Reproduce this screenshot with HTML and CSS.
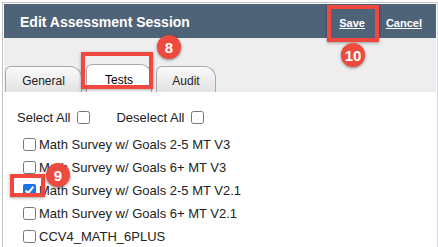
FILE: index.html
```html
<!DOCTYPE html>
<html lang="en">
<head>
    <meta charset="UTF-8">
    <title>Edit Assessment Session</title>
    <link rel="stylesheet" href="styles.css">
</head>
<body>
    <div class="dialog">
        <div class="dialog-header">
            <h1>Edit Assessment Session</h1>
            <div class="actions">
                <a href="#" class="save-link">Save</a>
                <a href="#">Cancel</a>
            </div>
        </div>
        <!-- tabs -->
        <div class="tab-band">
            <div class="tab">General</div>
            <div class="tab active">Tests</div>
            <div class="tab">Audit</div>
        </div>
        <div class="content">
            <div class="select-row">
                <label>Select All <input type="checkbox"></label>
                <label>Deselect All <input type="checkbox"></label>
            </div>
            <ul class="test-list">
                <li><label><input type="checkbox">Math Survey w/ Goals 2-5 MT V3</label></li>
                <li><label><input type="checkbox">Math Survey w/ Goals 6+ MT V3</label></li>
                <li><label><input type="checkbox" checked>Math Survey w/ Goals 2-5 MT V2.1</label></li>
                <li><label><input type="checkbox">Math Survey w/ Goals 6+ MT V2.1</label></li>
                <li><label><input type="checkbox">CCV4_MATH_6PLUS</label></li>
            </ul>
        </div>
    </div>

    <!-- callouts -->
    <div class="callout-box box-save"></div>
    <div class="badge badge-save">10</div>
    <div class="callout-box box-tests"></div>
    <div class="badge badge-tests">8</div>
    <div class="callout-box box-check"></div>
    <div class="badge badge-check">9</div>
</body>
</html>
```

FILE: styles.css
```css
body {
    margin: 0;
    font-family: "Liberation Sans", Arial, sans-serif;
    background-color: #fff;
    overflow: hidden;
}
.dialog {
    margin: 2px 0 0 2px;
    border: 1px solid #c4c4c4;
    border-right: 1px solid #d6d6e0;
    border-bottom: none;
    padding: 1px 0 0 1px;
    height: 245px;
    width: 436px;
    box-sizing: border-box;
}
.dialog-header {
    background-color: #4f6378;
    height: 34px;
    display: flex;
    align-items: center;
    justify-content: space-between;
    padding: 0 14px 0 16px;
    margin-right: 1px;
}
.dialog-header h1 {
    color: #fff;
    font-size: 14px;
    font-weight: bold;
    margin: 0;
    padding-top: 1px;
}
.actions {
    display: flex;
    gap: 21px;
    padding-top: 3px;
}
.actions a {
    color: #fff;
    font-size: 11px;
    font-weight: bold;
    text-decoration: underline;
}
.tab-band {
    background-color: #eeeeee;
    height: 54px;
    display: flex;
    align-items: flex-end;
    padding-left: 1px;
    gap: 4px;
    margin-right: 1px;
}
.tab {
    height: 26px;
    box-sizing: border-box;
    border: 1px solid #a9a9a9;
    border-bottom: none;
    border-radius: 6px 12px 0 0;
    background: linear-gradient(#fafafa, #e2e2e2);
    font-size: 12px;
    color: #222;
    display: flex;
    align-items: center;
    justify-content: center;
    padding-top: 2px;
}
.tab:nth-child(1) {
    width: 77px;
}
.tab:nth-child(2) {
    width: 66px;
}
.tab:nth-child(3) {
    width: 60px;
}
.tab.active {
    background: #fff;
    color: #000;
    height: 28px;
}
.content {
    padding: 13px 0 0 13px;
    font-size: 13px;
    color: #222;
}
.select-row {
    display: flex;
    gap: 26px;
    height: 24px;
    align-items: center;
}
.select-row label {
    display: flex;
    align-items: center;
    gap: 7px;
}
input[type="checkbox"] {
    width: 13px;
    height: 13px;
    margin: 0;
    accent-color: #1a73e8;
}
.test-list {
    list-style: none;
    margin: 4px 0 0 0;
    padding: 0 0 0 6px;
}
.test-list li {
    height: 23px;
    display: flex;
    align-items: center;
}
.test-list label {
    display: flex;
    align-items: center;
    gap: 3px;
}
.callout-box {
    position: absolute;
    border: 4px solid #f0483e;
    box-sizing: border-box;
    box-shadow: 0 1px 3px rgba(0, 0, 0, 0.35);
}
.box-save {
    left: 327px;
    top: 5px;
    width: 52px;
    height: 37px;
}
.box-tests {
    left: 81px;
    top: 52px;
    width: 72px;
    height: 37px;
}
.box-check {
    left: 10px;
    top: 174px;
    width: 35px;
    height: 23px;
}
.badge {
    position: absolute;
    width: 24px;
    height: 24px;
    border-radius: 50%;
    background-color: #ee4a3d;
    color: #fff;
    font-weight: bold;
    font-size: 15px;
    display: flex;
    align-items: center;
    justify-content: center;
    box-shadow: 0 1px 3px rgba(0, 0, 0, 0.45);
}
.badge-save {
    left: 341px;
    top: 43px;
}
.badge-tests {
    left: 157px;
    top: 35px;
}
.badge-check {
    left: 46px;
    top: 163px;
}
```
